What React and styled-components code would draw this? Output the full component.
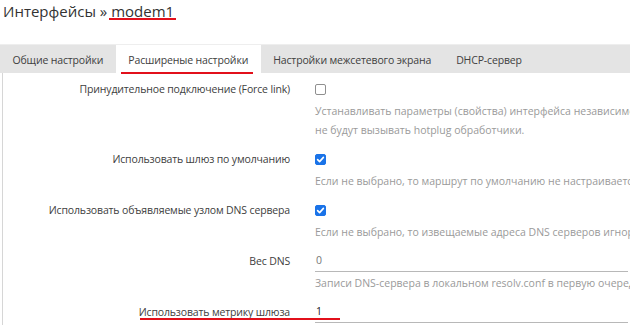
import React from "react";
import styled, { createGlobalStyle } from "styled-components";

const Global = createGlobalStyle`
  html, body { margin: 0; padding: 0; background: #fff; overflow: hidden; }
  body { font-family: "Open Sans", "Noto Sans", sans-serif; color: #404040; }
`;

const Page = styled.div`
  width: 630px;
  height: 325px;
  overflow: hidden;
  position: relative;
`;

const Title = styled.h2`
  margin: 0;
  padding: 0 0 0 3px;
  height: 44px;
  line-height: 22px;
  box-sizing: border-box;
  font-size: 15px;
  font-weight: 400;
  color: #333;
  white-space: nowrap;
`;

const Mark = styled.span`
  position: relative;
  &::after {
    content: "";
    position: absolute;
    left: ${(p) => p.$l || 0}px;
    right: ${(p) => p.$r || 0}px;
    bottom: ${(p) => p.$b || 0}px;
    height: 2px;
    background: #e2101b;
  }
`;

const Tabs = styled.div`
  display: flex;
  height: 29px;
  background: #e4e4e4;
  border-top: 1px solid #eeeeee;
  box-sizing: border-box;
`;

const Tab = styled.div`
  position: relative;
  display: flex;
  align-items: center;
  padding: 1px 12.5px 0;
  font-size: 10.5px;
  letter-spacing: -0.15px;
  color: #404040;
  white-space: nowrap;
  background: ${(p) => (p.$active ? "#fff" : "transparent")};
`;

const Body = styled.div`
  border-left: 1px solid #d6d6d6;
  margin-left: 2px;
  padding-top: 5px;
`;

const Row = styled.div`
  display: grid;
  grid-template-columns: 287px 1fr;
  column-gap: 25px;
  padding-bottom: 10px;
`;

const Label = styled.div`
  position: relative;
  height: 22px;
  line-height: 22px;
  text-align: right;
  font-size: 10.5px;
  letter-spacing: -0.15px;
  color: #404040;
  white-space: nowrap;
`;

const Field = styled.div`
  display: flex;
  flex-direction: column;
  min-width: 0;
`;

const Control = styled.div`
  height: 22px;
  display: flex;
  align-items: center;
`;

const Box = styled.span`
  width: 11px;
  height: 11px;
  box-sizing: border-box;
  border-radius: 2px;
  border: 1px solid ${(p) => (p.$checked ? "#1a73e8" : "#8f8f8f")};
  background: ${(p) => (p.$checked ? "#1a73e8" : "#fff")};
  display: flex;
  align-items: center;
  justify-content: center;
`;

const Input = styled.div`
  height: 22px;
  box-sizing: border-box;
  border-bottom: 1px solid #b8b8b8;
  width: 313px;
  font-size: 10.5px;
  line-height: 20px;
  padding-left: 1px;
  color: ${(p) => (p.$strong ? "#222" : "#777")};
`;

const Desc = styled.div`
  margin-top: 4px;
  font-size: 10.5px;
  line-height: 15px;
  color: #9a9a9a;
  white-space: nowrap;
`;

const Underline = styled.div`
  position: absolute;
  left: 140px;
  top: 318px;
  width: 200px;
  height: 2px;
  background: #e2101b;
`;

const Check = () => (
  <svg width="9" height="9" viewBox="0 0 9 9">
    <path d="M1.6 4.6 L3.6 6.6 L7.4 2.4" fill="none" stroke="#fff" strokeWidth="1.6" strokeLinecap="round" strokeLinejoin="round" />
  </svg>
);

const rows = [
  {
    label: "Принудительное подключение (Force link)",
    type: "check",
    checked: false,
    desc: [
      "Устанавливать параметры (свойства) интерфейса независимо от наличия несущей (если установлено, события",
      "не будут вызывать hotplug обработчики.",
    ],
  },
  {
    label: "Использовать шлюз по умолчанию",
    type: "check",
    checked: true,
    desc: ["Если не выбрано, то маршрут по умолчанию не настраивается"],
  },
  {
    label: "Использовать объявляемые узлом DNS сервера",
    type: "check",
    checked: true,
    desc: ["Если не выбрано, то извещаемые адреса DNS серверов игнорируются"],
  },
  {
    label: "Вес DNS",
    type: "input",
    value: "0",
    desc: ["Записи DNS-сервера в локальном resolv.conf в первую очередь"],
  },
  {
    label: "Использовать метрику шлюза",
    type: "input",
    value: "1",
    strong: true,
    desc: [],
  },
];

export default function App() {
  return (
    <Page>
      <Global />
      <Title>
        Интерфейсы » <Mark $l={-2} $r={-2} $b={1.5}>modem1</Mark>
      </Title>
      <Tabs>
        <Tab>Общие настройки</Tab>
        <Tab $active>
          <Mark $l={-7} $r={-5} $b={-7}>Расширеные настройки</Mark>
        </Tab>
        <Tab>Настройки межсетевого экрана</Tab>
        <Tab>DHCP-сервер</Tab>
      </Tabs>
      <Body>
        {rows.map((r) => (
          <Row key={r.label}>
            <Label>{r.label}</Label>
            <Field>
              {r.type === "check" ? (
                <Control>
                  <Box $checked={r.checked}>{r.checked && <Check />}</Box>
                </Control>
              ) : (
                <Input $strong={r.strong}>{r.value}</Input>
              )}
              {r.desc.map((d) => (
                <Desc key={d}>{d}</Desc>
              ))}
            </Field>
          </Row>
        ))}
      </Body>
      <Underline />
    </Page>
  );
}
